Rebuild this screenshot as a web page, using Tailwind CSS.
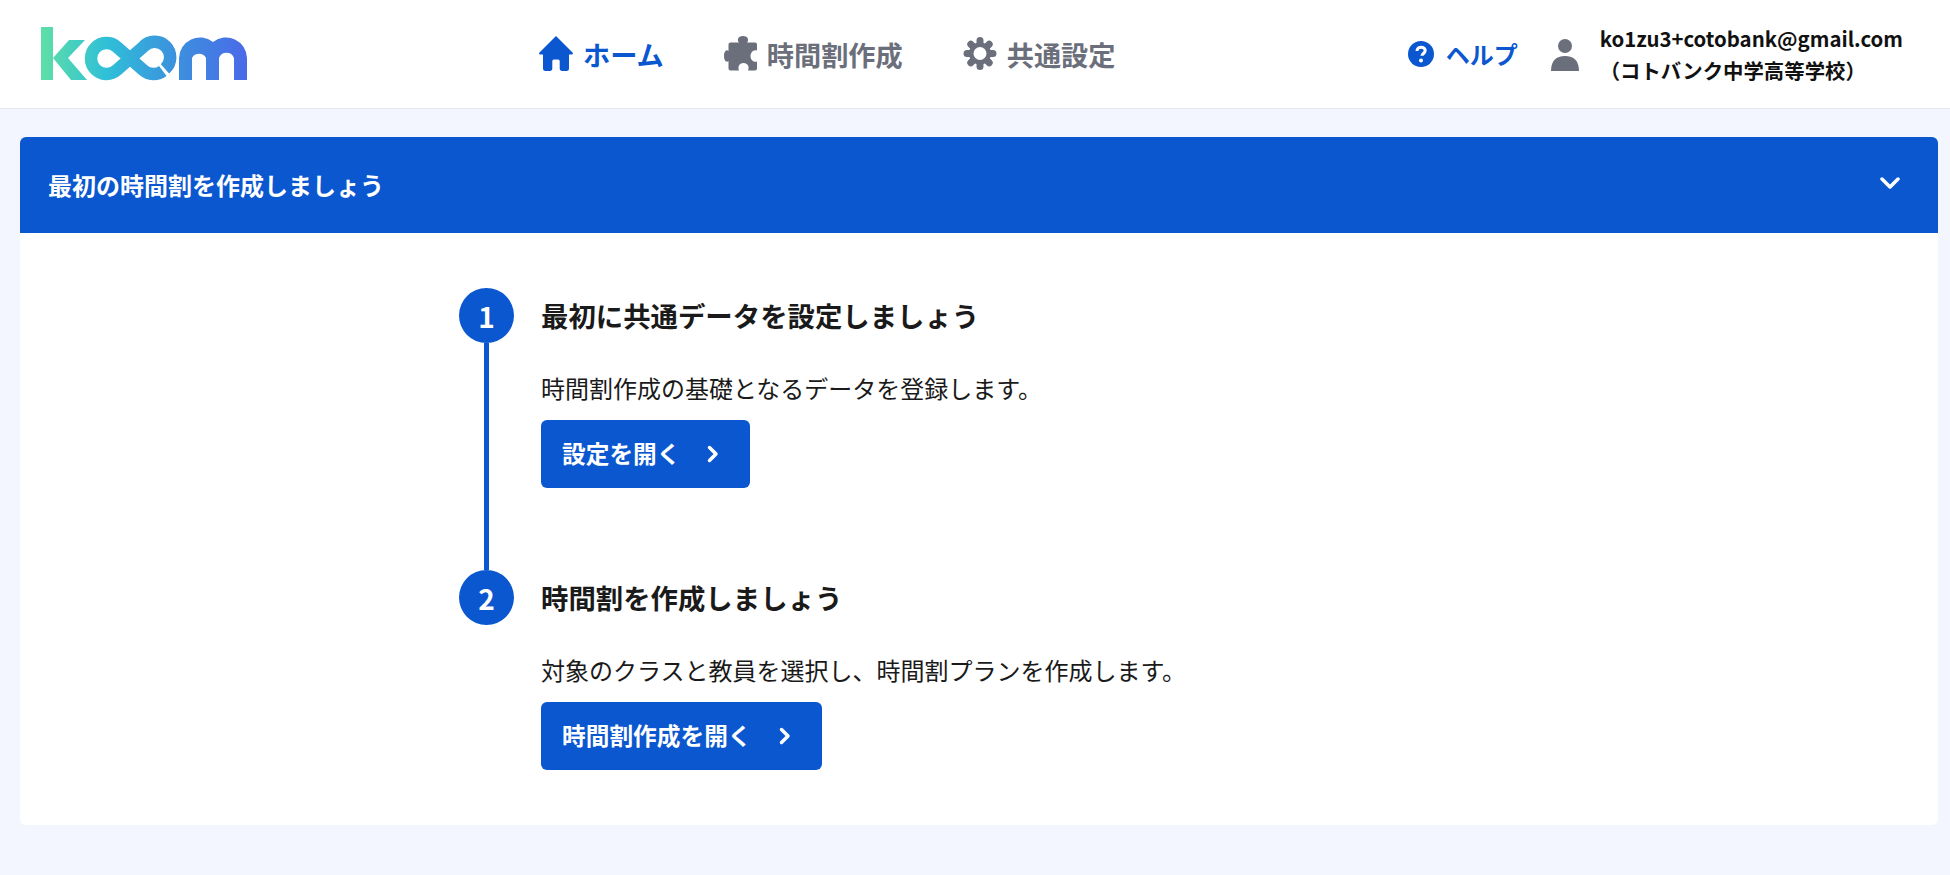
<!DOCTYPE html>
<html lang="ja">
<head>
  <meta charset="UTF-8" />
  <title>koom</title>
  <script src="https://cdn.jsdelivr.net/npm/@tailwindcss/browser@4"></script>
</head>
<body class="h-[875px] overflow-hidden bg-[#f3f6fe] font-['Noto_Sans_CJK_JP','Noto_Sans',sans-serif] text-[#1a1a1a]">

  <!-- header -->
  <header class="relative flex h-[109px] items-center justify-between border-b border-[#e4e7ee] bg-white pl-[41px] pr-[47px]">
    <svg width="206" height="54" viewBox="41 27 206 54">
      <defs>
        <linearGradient id="logoGrad" gradientUnits="userSpaceOnUse" x1="41" y1="0" x2="247" y2="0">
          <stop offset="0" stop-color="#5fdfa6" />
          <stop offset="0.32" stop-color="#2fbfd8" />
          <stop offset="0.62" stop-color="#3b95dd" />
          <stop offset="1" stop-color="#4a69e8" />
        </linearGradient>
      </defs>
      <path fill="url(#logoGrad)" d="M41 27h12v53H41zM53 58l16-18h16L68 58l19 22H71z" />
      <!-- the two o's are one infinity ribbon with a slit at the lower right -->
      <path fill="none" stroke="url(#logoGrad)" stroke-width="12.500" d="M165 68.900A15.500 15.500 0 1 0 143.270 46.850L116.730 70.150A15.500 15.500 0 1 1 116.730 46.850L143.270 70.150A15.500 15.500 0 0 0 162.800 70.900" />
      <path fill="url(#logoGrad)" d="M179 80V58a21 21 0 0 1 34-16 21 21 0 0 1 34 16v22h-13V58a8 8 0 0 0-15 0v22h-13V58a8 8 0 0 0-14 0v22z" />
    </svg>

    <nav class="absolute left-[539px] top-0 flex h-full items-center text-[27.200px] font-bold">
      <a href="#" class="flex items-center gap-[10px] text-[#0b57d0]">
        <svg width="34" height="35" viewBox="0 0 34 35" fill="currentColor"><path d="M17 0 33.500 16.500c.8.900.2 2-.8 2H30v14c0 1.300-.9 2.500-2.300 2.500H23c-1.300 0-2.300-1-2.300-2.500V25a1.500 1.500 0 0 0-1.500-1.500h-4.400a1.500 1.500 0 0 0-1.500 1.500v7.500c0 1.500-1 2.500-2.300 2.500H6.300C4.900 35 4 33.800 4 32.500v-14H1.300c-1 0-1.600-1.100-.8-2z" /></svg>
        ホーム
      </a>
      <a href="#" class="ml-[60px] flex items-center gap-[9px] text-[#6b6f7b]">
        <svg width="34" height="35" viewBox="0 0 34 35" fill="currentColor"><path d="M6.500 6.500H15C13 4.500 13.500 0 19 0S25 4.500 23 6.500H31a2 2 0 0 1 2 2V14.500C29.500 13 26.500 16.500 26.500 20S29.500 27 33 25.500V32.500a2 2 0 0 1-2 2H24C25.500 31 24 27 19.500 27S13.500 31 15 34.500H6.500a2 2 0 0 1-2-2V25C2 27 0 24 0 20S2 13 4.500 15V8.500a2 2 0 0 1 2-2z" /></svg>
        時間割作成
      </a>
      <a href="#" class="ml-[60px] flex items-center gap-[10px] text-[#6b6f7b]">
        <!-- eight rounded teeth, hole is knocked out in white -->
        <svg width="34" height="35" viewBox="0 0 34 34" fill="none" stroke="currentColor" stroke-width="7" stroke-linecap="round">
          <path d="M17 4V30M4 17H30M7.800 7.800 26.200 26.200M26.200 7.800 7.800 26.200" />
          <circle cx="17" cy="17" r="11" fill="currentColor" stroke="none" />
          <circle cx="17" cy="17" r="6.500" fill="#fff" stroke="none" />
        </svg>
        共通設定
      </a>
    </nav>

    <div class="flex items-center">
      <a href="#" class="flex items-center gap-[12px] text-[24px] font-bold text-[#0b57d0]">
        <svg width="26" height="26" viewBox="0 0 26 26"><circle cx="13" cy="13" r="13" fill="currentColor" /><path d="M9 10c0-2.300 1.800-3.800 4.200-3.800 2.300 0 4 1.400 4 3.400 0 2.800-3.200 2.900-3.200 5.200" fill="none" stroke="#fff" stroke-width="3" /><circle cx="13" cy="19.500" r="2" fill="#fff" /></svg>
        ヘルプ
      </a>
      <svg class="ml-[33px]" width="28" height="33" viewBox="0 0 28 33" fill="#6b6f7b"><circle cx="14" cy="8" r="7" /><path d="M0 33c0-10 5-15 14-15S28 23 28 33z" /></svg>
      <div class="ml-[21px] text-[20.400px] font-bold leading-[32px] text-[#111]">
        <p>ko1zu3+cotobank@gmail.com</p>
        <p>（コトバンク中学高等学校）</p>
      </div>
    </div>
  </header>

  <!-- first timetable card -->
  <section class="mx-[12px] ml-[20px] mt-[28px] overflow-hidden rounded-[6px] bg-white">
    <div class="flex h-[96px] items-center justify-between bg-[#0b57d0] pl-[28px] pr-[38px] text-white">
      <h2 class="-mt-px text-[24px] font-bold">最初の時間割を作成しましょう</h2>
      <svg class="-mt-1" width="20" height="14" viewBox="0 0 20 14" fill="none" stroke="currentColor" stroke-width="3.500" stroke-linecap="round" stroke-linejoin="round"><path d="M2 3l8 8 8-8" /></svg>
    </div>

    <div class="pl-[439px] pt-[55px] pb-[55px]">
      <!-- step 1 -->
      <div class="flex h-[282px] gap-[27px]">
        <div class="flex w-[55px] flex-col items-center">
          <span class="flex size-[55px] shrink-0 items-center justify-center rounded-full bg-[#0b57d0] text-[28px] font-bold text-white">1</span>
          <span class="w-[5px] grow bg-[#0b57d0]"></span>
        </div>
        <div>
          <h3 class="flex h-[55px] items-center text-[27.400px] font-bold">最初に共通データを設定しましょう</h3>
          <p class="mt-[25px] text-[24px] leading-[40px]">時間割作成の基礎となるデータを登録します。</p>
          <a href="#" class="mt-[12px] inline-flex h-[68px] items-center gap-[27px] rounded-[6px] bg-[#0b57d0] pl-[21px] pr-[31px] text-[23.700px] font-bold text-white">
            設定を開く
            <svg width="12" height="18" viewBox="0 0 12 18" fill="none" stroke="currentColor" stroke-width="3.500" stroke-linecap="round" stroke-linejoin="round"><path d="M2.500 2.500 9 9l-6.500 6.500" /></svg>
          </a>
        </div>
      </div>
      <!-- step 2 -->
      <div class="flex gap-[27px]">
        <div class="flex w-[55px] flex-col items-center">
          <span class="flex size-[55px] shrink-0 items-center justify-center rounded-full bg-[#0b57d0] text-[28px] font-bold text-white">2</span>
        </div>
        <div>
          <h3 class="flex h-[55px] items-center text-[27.400px] font-bold">時間割を作成しましょう</h3>
          <p class="mt-[25px] text-[24px] leading-[40px]">対象のクラスと教員を選択し、時間割プランを作成します。</p>
          <a href="#" class="mt-[12px] inline-flex h-[68px] items-center gap-[27px] rounded-[6px] bg-[#0b57d0] pl-[21px] pr-[31px] text-[23.700px] font-bold text-white">
            時間割作成を開く
            <svg width="12" height="18" viewBox="0 0 12 18" fill="none" stroke="currentColor" stroke-width="3.500" stroke-linecap="round" stroke-linejoin="round"><path d="M2.500 2.500 9 9l-6.500 6.500" /></svg>
          </a>
        </div>
      </div>
    </div>
  </section>
</body>
</html>
